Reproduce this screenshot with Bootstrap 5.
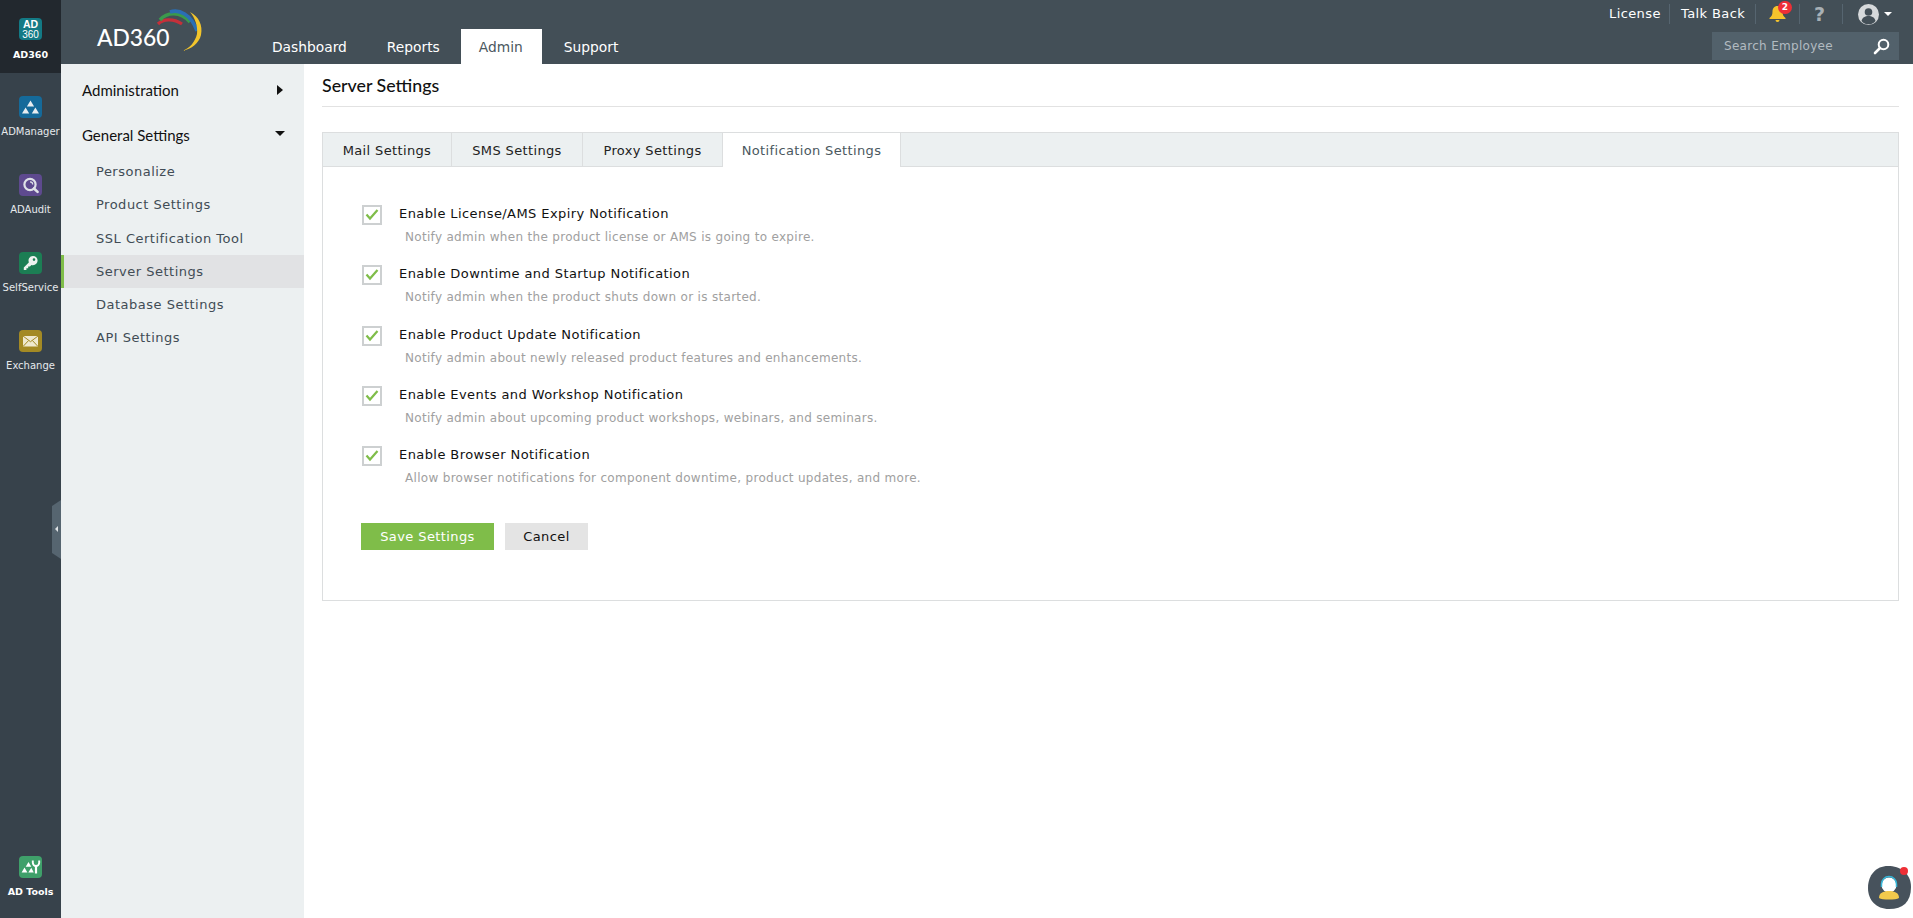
<!DOCTYPE html>
<html lang="en">
<head>
<meta charset="UTF-8">
<meta name="viewport" content="width=device-width, initial-scale=1.0">
<title>AD360 - Server Settings</title>
<link href="https://cdn.jsdelivr.net/npm/bootstrap@5.3.0/dist/css/bootstrap.min.css" rel="stylesheet">
<style>
html, body { height: 100%; overflow: hidden; }
body { font-family: "DejaVu Sans", sans-serif; font-size: 13px; color: #222; background: #fff; }
.app-shell { height: 918px; }

/* product rail */
.prod-rail { width: 61px; background: #37424b; flex: none; position: relative; }
.rail-item { height: 78px; padding-top: 18px; color: #e6e9eb; font-size: 10px; line-height: 12px; white-space: nowrap; }
.rail-item.current { height: 73px; margin-bottom: 5px; background: #22282e; color: #fff; }
.rail-item.current .rail-ico { margin-bottom: 9px; }
.rail-item.tools { height: 62px; padding-top: 0; margin-top: auto; color: #fff; }
.rail-ico { width: 23px; height: 22px; border-radius: 4px; margin-bottom: 8px; }
.rail-ico svg { display: block; width: 23px; height: 22px; }
.rail-name-strong { font-size: 9.5px; font-weight: 700; }
.ico-ad { background: #137a85; color: #fff; font-family: "Liberation Sans", sans-serif; line-height: 9.5px; font-size: 10px; text-align: center; padding-top: 2px; }
.ico-ad b { display: block; font-size: 10.5px; }
.rail-toggle { position: absolute; left: 52px; top: 500px; width: 9px; height: 59px; background: #566570; clip-path: polygon(100% 0, 100% 100%, 0 90%, 0 10%); }
.rail-toggle i { position: absolute; left: 3px; top: 26px; border: 3px solid transparent; border-left: 0; border-right: 3px solid #dfe3e6; }

/* top bar */
.top-bar { height: 64px; background: #434f57; flex: none; position: relative; }
.brand-box { width: 191px; position: relative; flex: none; }
.brand-name { position: absolute; left: 36px; top: 22px; font-family: "Lato", sans-serif; font-size: 22.8px; font-weight: 500; line-height: 30px; color: #fff; }
.brand-arcs { position: absolute; left: 0; top: 0; width: 191px; height: 64px; }
.main-nav { align-self: flex-end; }
.main-nav .nav-link { height: 35px; padding: 9px 20px 0; color: #fff; font-size: 13.8px; line-height: 18px; }
.main-nav .nav-link.active { width: 81px; margin-left: 1px; margin-right: 2px; padding-left: 18px; padding-right: 0; background: #fff; color: #4b5860; }
.top-tools { position: absolute; right: 14px; top: 0; width: 290px; }
.tool-links { height: 24px; color: #fff; font-size: 13px; letter-spacing: .4px; }
.tool-links > div { height: 20px; display: flex; align-items: center; border-right: 1px solid #566570; }
.tool-license { width: 61px; }
.tool-talk { width: 86px; padding-left: 11px; }
.tool-bell { width: 44px; padding-left: 12px; position: relative; }
.tool-help { width: 43px; padding-left: 14px; color: #a8b0b5; font-size: 19px; font-weight: 700; }
.tool-links > .tool-user { border-right: 0; padding-left: 15px; }
.bell-count { position: absolute; left: 22px; top: -3px; width: 14px; height: 13px; border-radius: 7px; background: #ee2f36; color: #fff; font-size: 9px; font-weight: 700; line-height: 13px; text-align: center; letter-spacing: 0; }
.caret-down { display: inline-block; margin-left: 5px; border: 4px solid transparent; border-bottom: 0; border-top: 4px solid #fff; }
.emp-search { width: 187px; height: 28px; background: #52616b; margin-top: 8px; margin-left: auto; }
.emp-search input { width: 150px; height: 28px; padding: 0 0 0 12px; border: 0; background: transparent; color: #fff; font-size: 12px; letter-spacing: .3px; font-family: inherit; outline: 0; }
.emp-search input::placeholder { color: #b2bbc1; opacity: 1; }
.emp-search svg { position: absolute; left: 161px; top: 6px; }

/* left menu */
.side-menu { width: 243px; background: #ecf0f1; flex: none; }
.menu-head { font-family: "Lato", sans-serif; font-size: 15px; line-height: 20px; color: #111; padding-left: 21px; padding-right: 21px; }
.menu-head.first { margin-top: 16px; margin-bottom: 25px; }
.menu-head.second { margin-bottom: 10px; }
.arrow-r { border: 5px solid transparent; border-right: 0; border-left: 6px solid #111; }
.arrow-d { border: 5.5px solid transparent; border-bottom: 0; border-top: 5px solid #111; margin-top: -4px; margin-right: -2px; }
.menu-list .list-group-item { height: 33.3px; padding: 0 0 0 35px; background: transparent; border: 0; border-radius: 0; color: #414c55; font-size: 13px; letter-spacing: .5px; line-height: 33px; }
.menu-list .list-group-item.active { background: #e1e2e4; color: #414c55; border-left: 3px solid #7fbd49; padding-left: 32px; margin: 0; }

/* content */
.page-body { padding: 0 14px 0 18px; min-width: 0; }
.page-title { height: 43px; margin: 0; border-bottom: 1px solid #e2e2e2; font-family: "Lato", sans-serif; font-size: 17.8px; font-weight: 500; line-height: 42px; color: #111; }
.set-panel { margin-top: 25px; height: 469px; border: 1px solid #dcdedf; }
.tab-row { background: #ecf0f1; border-bottom: 1px solid #dcdedf; height: 34px; }
.tab-row .nav-link { height: 33px; padding: 0; border: 0; border-right: 1px solid #dcdedf; border-radius: 0; color: #222; font-size: 13px; letter-spacing: .36px; line-height: 35px; margin: 0; text-align: center; }
.tab-row .nav-link.active { height: 34px; background: #fff; color: #4b5860; }
.tab-row .nav-item:nth-child(1) .nav-link { width: 129px; }
.tab-row .nav-item:nth-child(2) .nav-link { width: 131px; }
.tab-row .nav-item:nth-child(3) .nav-link { width: 140px; }
.tab-row .nav-item:nth-child(4) .nav-link { width: 178px; }
.opt-list { padding: 38px 0 0 39px; }
.opt-row { height: 60.3px; }
.opt-box { width: 20px; height: 20px; margin-right: 17px; border: 2px solid #cdd0d1; flex: none; }
.opt-box svg { display: block; width: 16px; height: 16px; }
.opt-label { font-size: 13px; letter-spacing: .42px; line-height: 18px; color: #111; }
.opt-note { font-size: 12px; letter-spacing: .31px; line-height: 16px; color: #a0a0a0; margin-top: 6px; margin-left: 6px; }
.save-row { margin-left: 38px; margin-top: 17px; }
.btn-save, .btn-cancel { height: 27px; padding: 0; border: 0; border-radius: 0; font-size: 13px; letter-spacing: .4px; line-height: 27px; }
.btn-save { width: 133px; background: #7fbd49; color: #fff; margin-right: 11px; }
.btn-cancel { width: 83px; background: #e4e4e4; color: #111; }

/* chat bubble */
.chat-bot { position: fixed; left: 1868px; top: 866px; width: 43px; height: 43px; }
</style>
</head>
<body>
<div class="app-shell d-flex">
    <!-- product rail -->
    <div class="prod-rail d-flex flex-column">
        <div class="rail-item current d-flex flex-column align-items-center">
            <div class="rail-ico ico-ad"><b>AD</b>360</div>
            <div class="rail-name-strong">AD360</div>
        </div>
        <div class="rail-item d-flex flex-column align-items-center">
            <div class="rail-ico" style="background:#156a9a">
                <svg viewBox="0 0 23 22"><path fill="#e8edf0" d="M11.5 4.5l3.6 6h-7.2zM6.6 11.5l3.6 6H3zM16.4 11.5l3.6 6h-7.2z"/></svg>
            </div>
            <div>ADManager</div>
        </div>
        <div class="rail-item d-flex flex-column align-items-center">
            <div class="rail-ico" style="background:#5e4a8f">
                <svg viewBox="0 0 23 22"><circle cx="11" cy="10.5" r="5.6" fill="none" stroke="#dfe2e8" stroke-width="2.2"/><path d="M15 14.5l3.6 3.4" stroke="#dfe2e8" stroke-width="2.6" stroke-linecap="round"/><path d="M11 7.8a2.7 2.7 0 0 1 2.7 2.7" stroke="#dfe2e8" fill="none" stroke-width="1.2"/></svg>
            </div>
            <div>ADAudit</div>
        </div>
        <div class="rail-item d-flex flex-column align-items-center">
            <div class="rail-ico" style="background:#1c7e54">
                <svg viewBox="0 0 23 22"><path fill="#eef2ef" fill-rule="evenodd" d="M14 4a4.6 4.6 0 0 1 0 9.2c-.6 0-1.100-.1-1.600-.3l-1.400 1.500H9.200v1.800H7.400V18H4.800v-2.400l5-5a4.600 4.600 0 0 1 4.200-6.600zm1 2.300a1.300 1.300 0 1 0 0 2.600 1.300 1.300 0 0 0 0-2.600z"/></svg>
            </div>
            <div>SelfService</div>
        </div>
        <div class="rail-item d-flex flex-column align-items-center">
            <div class="rail-ico" style="background:#a48a24">
                <svg viewBox="0 0 23 22"><rect x="4" y="6" width="15" height="10.500" fill="#efe9cf"/><path d="M4 6l7.500 5.700L19 6M4 16.500l5.600-6M19 16.500l-5.600-6" fill="none" stroke="#a48a24" stroke-width="1"/></svg>
            </div>
            <div>Exchange</div>
        </div>
        <div class="rail-item tools d-flex flex-column align-items-center">
            <div class="rail-ico" style="background:#3fa06a">
                <svg viewBox="0 0 23 22"><path fill="#fff" d="M9.500 6l2.800 4.800H6.700zM5.500 11.500l2.900 5H2.600zM12.300 11.800l2.500 4.700H9.300z"/><path fill="none" stroke="#fff" stroke-width="2.200" d="M17 9v8.500"/><path fill="none" stroke="#fff" stroke-width="1.900" d="M13.800 4.500v2.300a3.200 3.200 0 0 0 6.400 0V4.500"/></svg>
            </div>
            <div class="rail-name-strong">AD Tools</div>
        </div>
        <div class="rail-toggle"><i></i></div>
    </div>

    <div class="flex-grow-1 d-flex flex-column" style="min-width:0">
        <!-- top bar -->
        <div class="top-bar d-flex">
            <div class="brand-box">
                <div class="brand-name">AD360</div>
                <svg class="brand-arcs" viewBox="61 0 191 64" fill="none">
                    <path d="M158 24c5-5 15-6 24 0" stroke="#c5303a" stroke-width="3.200"/>
                    <path d="M160 20c7-8 20-9 30 2" stroke="#3a9a4c" stroke-width="3.500"/>
                    <path d="M170 12c9-3 21 2 27 19" stroke="#2a6fb5" stroke-width="3.500"/>
                    <path d="M190 12c9 5 13 13 11 23-2 8-9 14-19 16 8-3 13-9 15-17 1-8-2-16-7-22z" fill="#f2c52c"/>
                </svg>
            </div>
            <ul class="nav main-nav">
                <li class="nav-item"><a class="nav-link" href="#">Dashboard</a></li>
                <li class="nav-item"><a class="nav-link" href="#">Reports</a></li>
                <li class="nav-item"><a class="nav-link active" href="#">Admin</a></li>
                <li class="nav-item"><a class="nav-link" href="#">Support</a></li>
            </ul>
            <div class="top-tools">
                <div class="tool-links d-flex align-items-end">
                    <div class="tool-license">License</div>
                    <div class="tool-talk">Talk Back</div>
                    <div class="tool-bell">
                        <svg width="19" height="18" viewBox="0 0 19 18"><path fill="#f5c32c" d="M9.500 1c3.400 0 5 2.700 5 5.500 0 3.200 1 5 3 6.500v1h-16v-1c2-1.500 3-3.300 3-6.500C4.500 3.700 6.100 1 9.500 1zM7.500 15h4a2 2 0 0 1-4 0z"/></svg>
                        <span class="bell-count">2</span>
                    </div>
                    <div class="tool-help">?</div>
                    <div class="tool-user">
                        <svg width="21" height="21" viewBox="0 0 21 21"><circle cx="10.500" cy="10.500" r="10.500" fill="#d6d9db"/><circle cx="10.500" cy="8" r="3.800" fill="#434f57"/><path fill="#434f57" d="M3.500 17c.8-3.600 3.500-5 7-5s6.200 1.400 7 5a9 9 0 0 1-14 0z"/></svg>
                        <span class="caret-down"></span>
                    </div>
                </div>
                <div class="emp-search position-relative">
                    <input type="text" placeholder="Search Employee">
                    <svg width="17" height="17" viewBox="0 0 17 17" fill="none"><circle cx="10.500" cy="6.500" r="4.800" stroke="#fff" stroke-width="2"/><path d="M7 10l-5 5" stroke="#fff" stroke-width="2.600" stroke-linecap="round"/></svg>
                </div>
            </div>
        </div>

        <div class="d-flex flex-grow-1" style="min-height:0">
            <!-- left menu -->
            <div class="side-menu">
                <div class="menu-head first d-flex justify-content-between align-items-center">Administration<span class="arrow-r"></span></div>
                <div class="menu-head second d-flex justify-content-between align-items-center">General Settings<span class="arrow-d"></span></div>
                <div class="list-group menu-list">
                    <a href="#" class="list-group-item">Personalize</a>
                    <a href="#" class="list-group-item">Product Settings</a>
                    <a href="#" class="list-group-item">SSL Certification Tool</a>
                    <a href="#" class="list-group-item active">Server Settings</a>
                    <a href="#" class="list-group-item">Database Settings</a>
                    <a href="#" class="list-group-item">API Settings</a>
                </div>
            </div>

            <!-- content -->
            <div class="page-body flex-grow-1">
                <h1 class="page-title">Server Settings</h1>
                <div class="set-panel">
                    <ul class="nav tab-row">
                        <li class="nav-item"><a class="nav-link" href="#">Mail Settings</a></li>
                        <li class="nav-item"><a class="nav-link" href="#">SMS Settings</a></li>
                        <li class="nav-item"><a class="nav-link" href="#">Proxy Settings</a></li>
                        <li class="nav-item"><a class="nav-link active" href="#">Notification Settings</a></li>
                    </ul>
                    <div class="opt-list">
                        <div class="opt-row d-flex">
                            <span class="opt-box"><svg viewBox="0 0 16 16"><path d="M2.500 7.500l3.500 4 7.500-8.500" fill="none" stroke="#7fbd49" stroke-width="2.200"/></svg></span>
                            <div><div class="opt-label">Enable License/AMS Expiry Notification</div><div class="opt-note">Notify admin when the product license or AMS is going to expire.</div></div>
                        </div>
                        <div class="opt-row d-flex">
                            <span class="opt-box"><svg viewBox="0 0 16 16"><path d="M2.500 7.500l3.500 4 7.500-8.500" fill="none" stroke="#7fbd49" stroke-width="2.200"/></svg></span>
                            <div><div class="opt-label">Enable Downtime and Startup Notification</div><div class="opt-note">Notify admin when the product shuts down or is started.</div></div>
                        </div>
                        <div class="opt-row d-flex">
                            <span class="opt-box"><svg viewBox="0 0 16 16"><path d="M2.500 7.500l3.500 4 7.500-8.500" fill="none" stroke="#7fbd49" stroke-width="2.200"/></svg></span>
                            <div><div class="opt-label">Enable Product Update Notification</div><div class="opt-note">Notify admin about newly released product features and enhancements.</div></div>
                        </div>
                        <div class="opt-row d-flex">
                            <span class="opt-box"><svg viewBox="0 0 16 16"><path d="M2.500 7.500l3.500 4 7.500-8.500" fill="none" stroke="#7fbd49" stroke-width="2.200"/></svg></span>
                            <div><div class="opt-label">Enable Events and Workshop Notification</div><div class="opt-note">Notify admin about upcoming product workshops, webinars, and seminars.</div></div>
                        </div>
                        <div class="opt-row d-flex">
                            <span class="opt-box"><svg viewBox="0 0 16 16"><path d="M2.500 7.500l3.500 4 7.500-8.500" fill="none" stroke="#7fbd49" stroke-width="2.200"/></svg></span>
                            <div><div class="opt-label">Enable Browser Notification</div><div class="opt-note">Allow browser notifications for component downtime, product updates, and more.</div></div>
                        </div>
                    </div>
                    <div class="save-row d-flex">
                        <button type="button" class="btn btn-save">Save Settings</button>
                        <button type="button" class="btn btn-cancel">Cancel</button>
                    </div>
                </div>
            </div>
        </div>
    </div>
</div>

<!-- chat bubble -->
<svg class="chat-bot" viewBox="0 0 43 43">
    <path fill="#47525c" d="M20 0c12 0 23 7 23 21 0 15-8 22-22 22C8 43 0 34 0 22 0 9 8 0 20 0z"/>
    <circle cx="36" cy="5" r="4" fill="#ee2f36"/>
    <circle cx="21" cy="19" r="7.500" fill="#fff"/>
    <path d="M13.500 21v-3a7.500 7.500 0 0 1 15 0v3" fill="none" stroke="#38b6d8" stroke-width="1.500"/>
    <path fill="#f2c94c" d="M11 32c0-5 4-7 10-7s10 2 10 7c-3 2-17 2-20 0z"/>
</svg>

<script src="https://cdn.jsdelivr.net/npm/bootstrap@5.3.0/dist/js/bootstrap.bundle.min.js"></script>
</body>
</html>
